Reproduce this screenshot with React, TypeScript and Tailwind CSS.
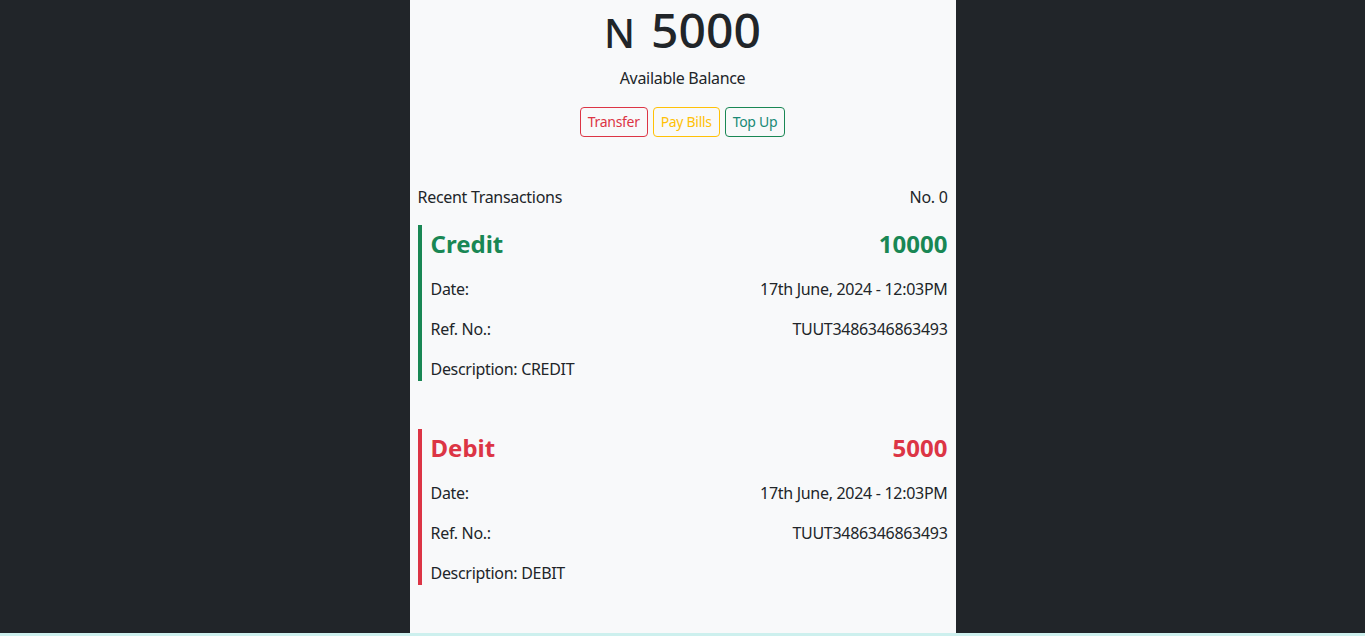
import React from "react";

const txs = [
  { type: "Credit", amount: "10000", color: "text-[#198754]", border: "border-[#198754]", desc: "CREDIT" },
  { type: "Debit", amount: "5000", color: "text-[#dc3545]", border: "border-[#dc3545]", desc: "DEBIT" },
];

export default function App() {
  return (
    <div className="w-full text-[#212529]" style={{ fontFamily: '"Noto Sans", "Open Sans", sans-serif' }}>
      <div className="h-[633px] bg-[#212529]">
        <div className="mx-auto h-full w-[546px] bg-[#f8f9fa]">
          <div className="flex flex-col items-center pt-[1px]">
            <h1 className="flex h-[58px] items-baseline gap-[16px] font-medium leading-[58px] text-[#212529]">
              <span className="text-[40px] leading-none">N</span>
              <span className="text-[48px] leading-[58px]">5000</span>
            </h1>
            <p className="mt-[7px] text-[16px] leading-6 tracking-[-0.3px]">Available Balance</p>
            <div className="mt-[17px] flex gap-[5px] text-[14px] leading-[20px] tracking-[-0.3px]">
              <button className="rounded-[4px] border border-[#dc3545] px-[7px] py-1 text-[#dc3545]">Transfer</button>
              <button className="rounded-[4px] border border-[#ffc107] px-[7px] py-1 text-[#ffc107]">Pay Bills</button>
              <button className="rounded-[4px] border border-[#198754] px-[7px] py-1 text-[#198a76]">Top Up</button>
            </div>
          </div>
          <div className="mt-[48px] px-2 tracking-[-0.3px]">
            <div className="flex justify-between text-[16px] leading-6">
              <span>Recent Transactions</span>
              <span>No. 0</span>
            </div>
            <div className="mt-4 flex flex-col gap-12">
              {txs.map((t) => (
                <div key={t.type} className={`flex flex-col border-l-4 pl-[9px] ${t.border}`}>
                  <div className={`mb-[19px] flex justify-between pt-[4px] text-[24px] font-bold leading-[29px] tracking-normal ${t.color}`}>
                    <span>{t.type}</span>
                    <span>{t.amount}</span>
                  </div>
                  <div className="flex justify-between text-[16px] leading-6">
                    <span>Date:</span>
                    <span>17th June, 2024 - 12:03PM</span>
                  </div>
                  <div className="mt-4 flex justify-between text-[16px] leading-6">
                    <span>Ref. No.:</span>
                    <span>TUUT3486346863493</span>
                  </div>
                  <div className="mt-4 text-[16px] leading-6">Description: {t.desc}</div>
                </div>
              ))}
            </div>
          </div>
        </div>
      </div>
      <div className="h-[3px] bg-[#cdf0ee]" />
    </div>
  );
}
